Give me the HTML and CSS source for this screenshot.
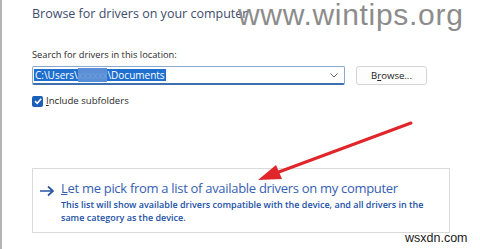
FILE: index.html
```html
<!DOCTYPE html>
<html lang="en">
<head>
<meta charset="utf-8">
<title>Browse for drivers</title>
<link rel="stylesheet" href="styles.css">
</head>
<body>
<div class="page">
  <h1 class="title">Browse for drivers on your computer</h1>
  <div class="label">Search for drivers in this location:</div>
  <div class="path-row">
    <div class="combo">
      <span class="sel">C:\Users\<span class="blur">xxxxxx</span>\Documents</span>
      <svg class="chev" width="8" height="5" viewBox="0 0 8 5"><path d="M0.5 0.5 L4 4 L7.5 0.5" fill="none" stroke="#666" stroke-width="1"/></svg>
    </div>
    <button class="browse">B<u>r</u>owse...</button>
  </div>
  <label class="check-row">
    <span class="box"><svg width="10" height="10" viewBox="0 0 10 10"><path d="M2 5.2 L4.2 7.3 L8.2 2.8" fill="none" stroke="#fff" stroke-width="1.6"/></svg></span>
    <span><u>I</u>nclude subfolders</span>
  </label>
  <div class="card">
    <svg class="go" width="16" height="12" viewBox="0 0 16 12"><path d="M1 6 H14 M9 1.5 L14 6 L9 10.5" fill="none" stroke="#2a56a8" stroke-width="1.7"/></svg>
    <div class="card-text">
      <div class="card-title"><u>L</u>et me pick from a list of available drivers on my computer</div>
      <div class="card-desc">This list will show available drivers compatible with the device, and all drivers in the<br>same category as the device.</div>
    </div>
  </div>
</div>
<div class="wm">www.wintips.org</div>
<svg class="red-arrow" width="480" height="249" viewBox="0 0 480 249">
  <line x1="411" y1="123" x2="272" y2="174.5" stroke="#e0262a" stroke-width="3" stroke-linecap="round"/>
  <polygon points="258,180 276,165 282,179" fill="#e0262a"/>
</svg>
<div class="wm2">wsxdn.com</div>
</body>
</html>
```
FILE: styles.css
```css
html, body {
  margin: 0;
  padding: 0;
  background: #fff;
}
body {
  width: 480px;
  height: 249px;
  overflow: hidden;
  position: relative;
  font-family: "Open Sans", "Noto Sans", sans-serif;
}
.page {
  box-sizing: border-box;
  height: 249px;
  border-left: 2px solid #b4b4b4;
  padding: 0 0 0 30px;
  display: flex;
  flex-direction: column;
}
.title {
  margin: 4px 0 0 0;
  font-weight: 400;
  font-size: 12.5px;
  line-height: 20px;
  color: #3e4c6e;
  white-space: nowrap;
}
.label {
  margin-top: 24px;
  font-size: 9.3px;
  line-height: 14px;
  color: #2a2a2a;
}
.path-row {
  margin-top: 4px;
  display: flex;
  gap: 11px;
  align-items: center;
}
.combo {
  box-sizing: border-box;
  width: 313px;
  height: 19px;
  border: 1px solid #8aa9cc;
  border-bottom: 2px solid #3e6fae;
  border-radius: 2px;
  display: flex;
  align-items: center;
  justify-content: space-between;
  padding: 0 6px 0 1px;
}
.sel {
  background: #1f6fcf;
  color: #fff;
  font-size: 10px;
  line-height: 12px;
  padding: 0 1px;
  white-space: nowrap;
}
.blur {
  color: #6f9ddb;
  background: #5a8fd6;
  letter-spacing: -0.3px;
}
.browse {
  box-sizing: border-box;
  width: 71px;
  height: 19px;
  border: 1px solid #d4d4d4;
  border-radius: 3px;
  background: #fdfdfd;
  font-family: inherit;
  font-size: 9.6px;
  color: #222;
  padding: 0;
}
.check-row {
  margin-top: 10px;
  display: flex;
  align-items: center;
  gap: 3px;
  font-size: 9.6px;
  line-height: 12px;
  color: #2a2a2a;
}
.box {
  width: 11px;
  height: 11px;
  border-radius: 2px;
  background: #1a5fb8;
  display: flex;
  align-items: center;
  justify-content: center;
}
.card {
  box-sizing: border-box;
  margin-top: 61px;
  width: 418px;
  height: 65px;
  border: 1px solid #dadada;
  background: #fff;
  display: flex;
  align-items: flex-start;
  padding: 12px 0 0 6px;
  gap: 6px;
}
.go {
  margin-top: 4px;
  flex: none;
}
.card-text {
  display: flex;
  flex-direction: column;
}
.card-title {
  font-size: 13px;
  letter-spacing: -0.3px;
  line-height: 17px;
  color: #3560b3;
  margin-top: -1px;
  white-space: nowrap;
}
.card-desc {
  margin-top: 2px;
  font-size: 9px;
  font-weight: 600;
  line-height: 12.5px;
  color: #2150a6;
  white-space: nowrap;
}
.wm {
  position: absolute;
  left: 238px;
  top: 0;
  font-family: "Liberation Sans", Arial, sans-serif;
  font-size: 30px;
  line-height: 29px;
  letter-spacing: 0.7px;
  color: #8c8c8c;
}
.red-arrow {
  position: absolute;
  left: 0;
  top: 0;
}
.wm2 {
  position: absolute;
  left: 405px;
  top: 232px;
  font-family: "Liberation Sans", Arial, sans-serif;
  font-size: 12.5px;
  line-height: 13px;
  color: #1a1a1a;
}
```
